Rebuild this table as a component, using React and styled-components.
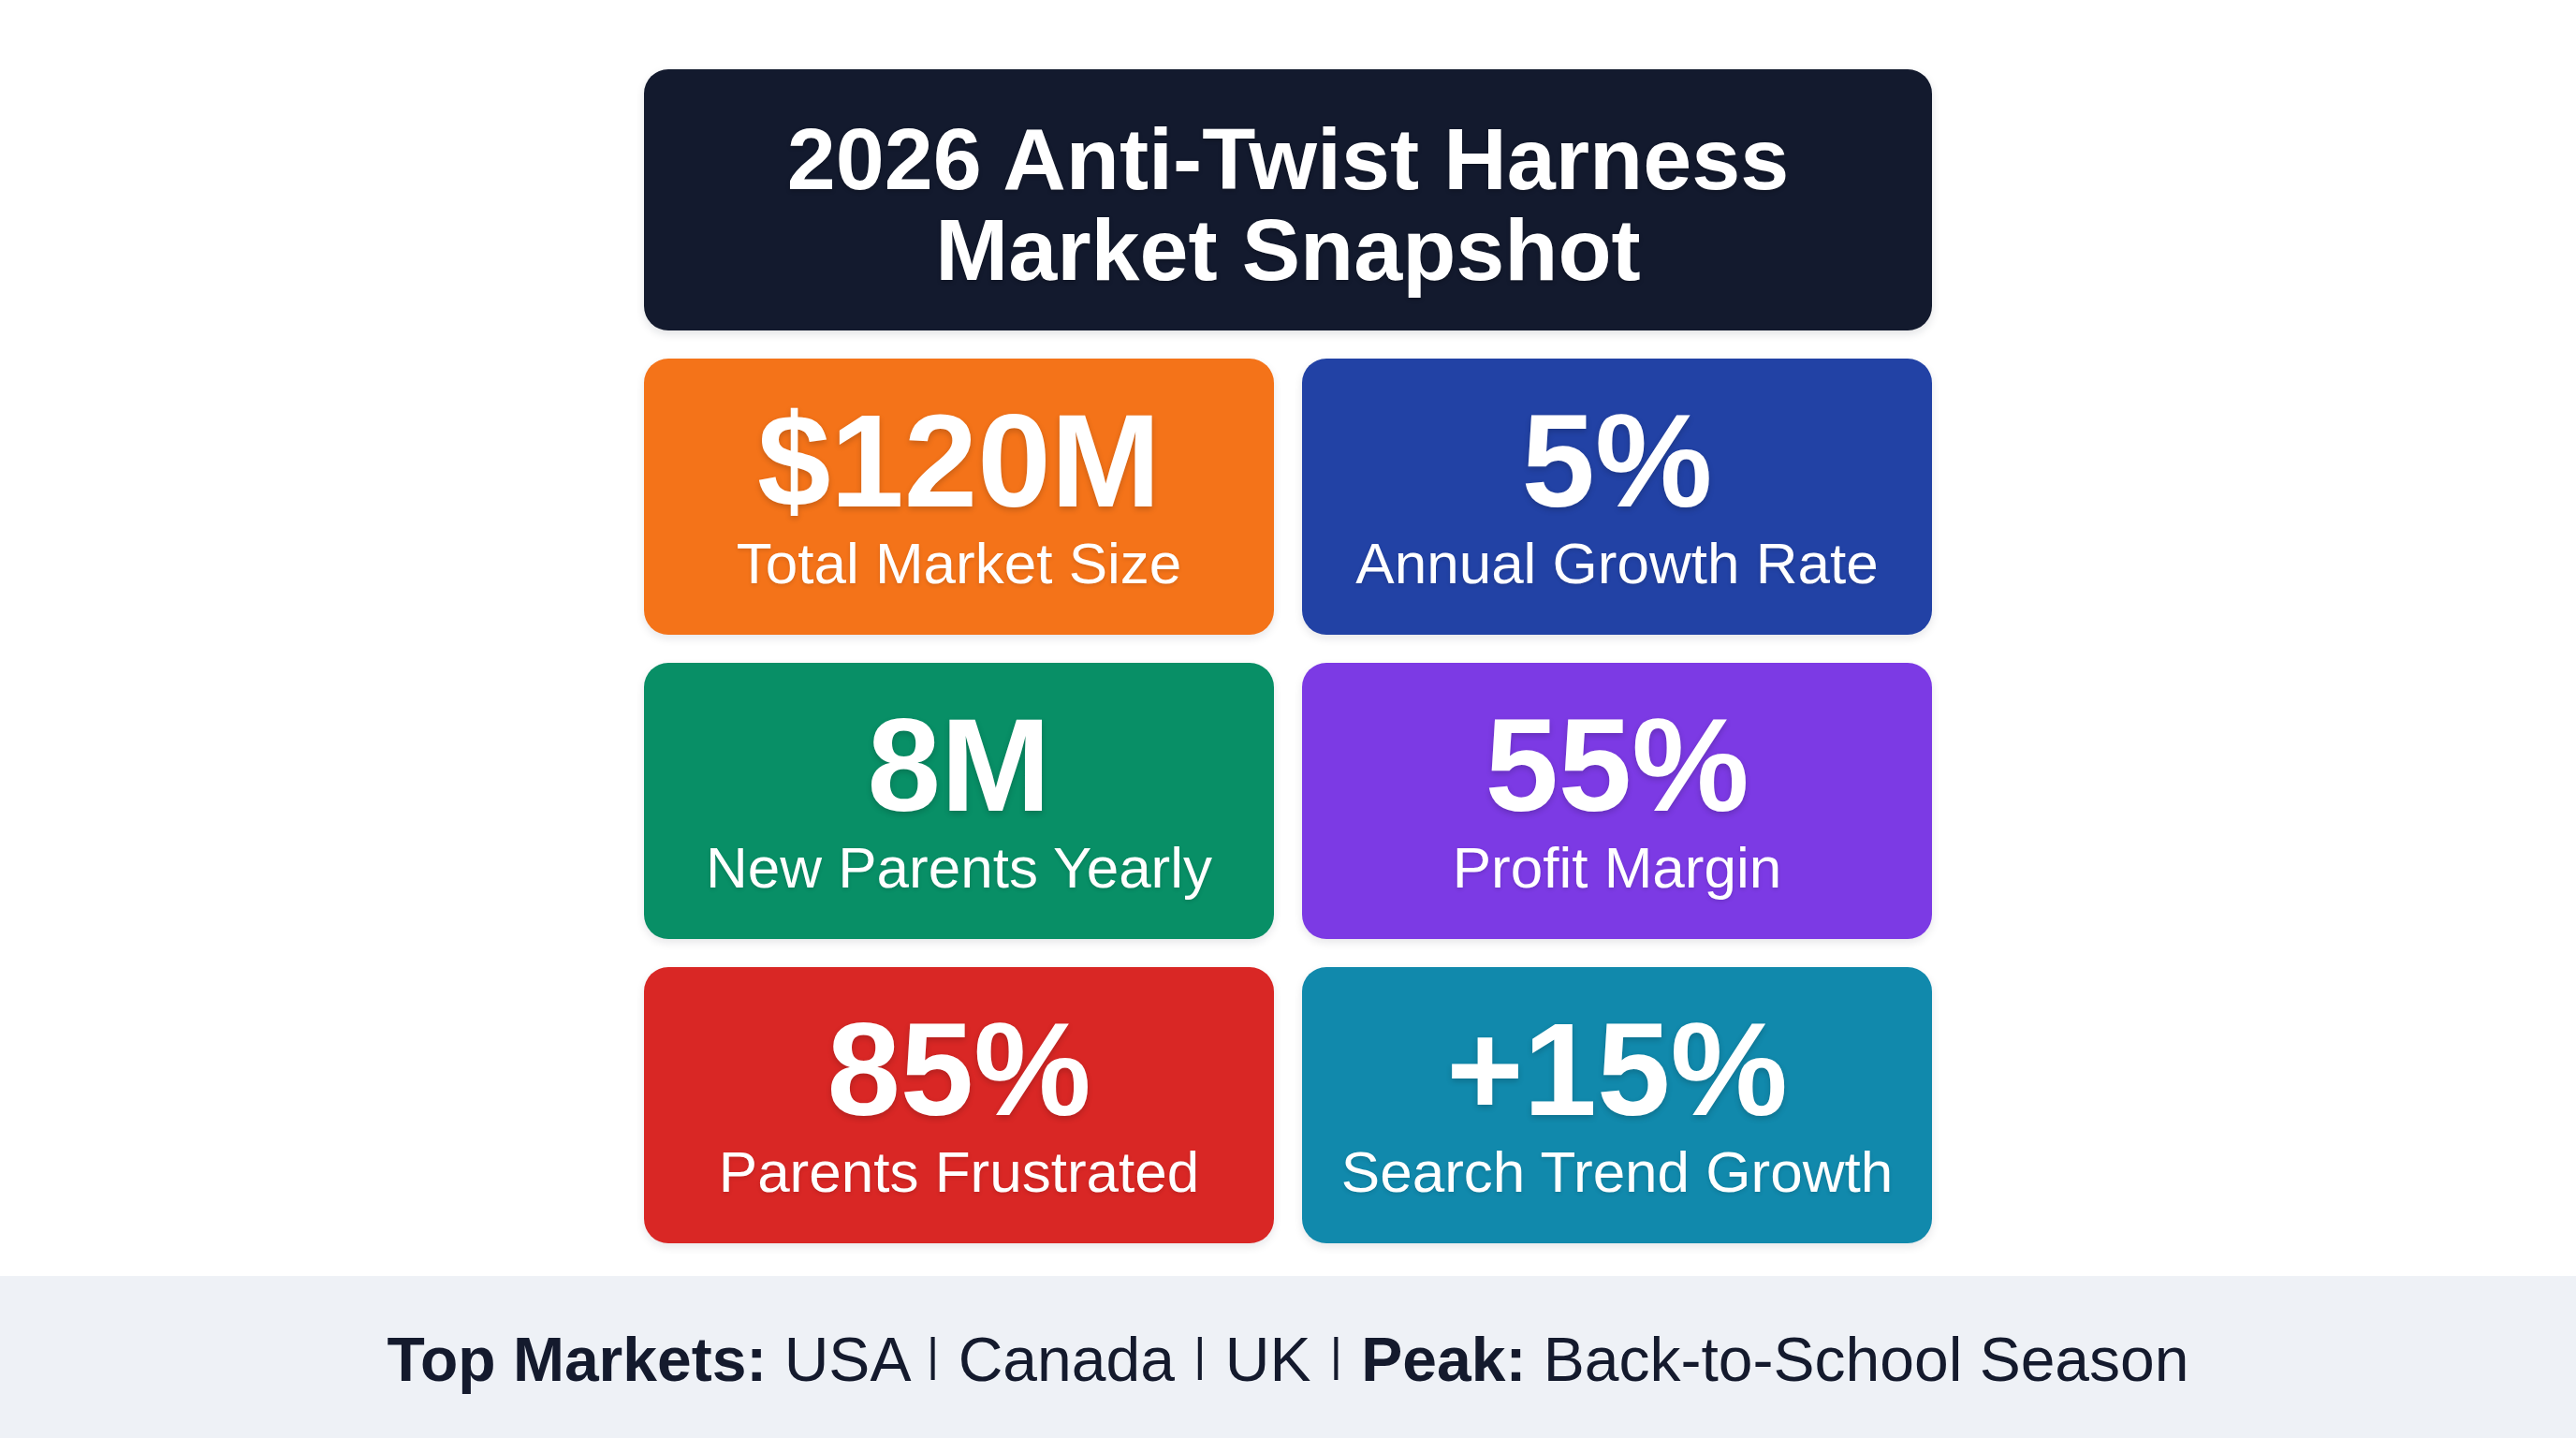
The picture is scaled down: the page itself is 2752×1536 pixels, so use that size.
import styled, { createGlobalStyle } from "styled-components"

const GlobalStyle = createGlobalStyle`
  html, body {
    margin: 0;
    padding: 0;
    background: #ffffff;
  }

  body {
    font-family: "Liberation Sans", Arial, Helvetica, sans-serif;
  }
`

const Page = styled.div`
  display: flex;
  flex-direction: column;
  width: 100%;
  height: 1536px;
  overflow: hidden;
`

const Main = styled.main`
  flex: 1;
  display: flex;
  justify-content: center;
  padding-top: 74px;
`

const Board = styled.div`
  display: flex;
  flex-direction: column;
  gap: 30px;
  width: 1376px;
`

const TitleCard = styled.div`
  height: 279px;
  display: flex;
  align-items: center;
  justify-content: center;
  background: #131a2e;
  border-radius: 26px;
  box-shadow: 0 4px 10px rgba(15, 23, 42, 0.12);
`

const Title = styled.h1`
  margin: 0;
  padding-top: 8px;
  color: #ffffff;
  font-size: 93.5px;
  font-weight: 700;
  line-height: 97px;
  text-align: center;
  text-shadow: 0 2px 4px rgba(0, 0, 0, 0.25);
`

const Grid = styled.div`
  display: grid;
  grid-template-columns: 1fr 1fr;
  grid-auto-rows: 295px;
  gap: 30px;
`

const StatCard = styled.div`
  display: flex;
  flex-direction: column;
  align-items: center;
  justify-content: center;
  gap: 2px;
  background: ${({ $bg }) => $bg};
  border-radius: 26px;
  color: #ffffff;
  box-shadow: 0 4px 10px rgba(15, 23, 42, 0.1);
`

const Value = styled.div`
  font-size: 141px;
  font-weight: 700;
  line-height: 1;
  text-shadow: 0 3px 6px rgba(0, 0, 0, 0.18);
`

const Label = styled.div`
  font-size: 62px;
  font-weight: 400;
  line-height: 1.2;
  text-shadow: 0 2px 4px rgba(0, 0, 0, 0.12);
`

const Footer = styled.footer`
  height: 173px;
  display: flex;
  align-items: center;
  justify-content: center;
  padding-top: 4px;
  box-sizing: border-box;
  background: #eef1f6;
  color: #141a2d;
  font-size: 66px;
  line-height: 1;
`

const Strong = styled.b`
  font-weight: 700;
`

// smaller bar lifted onto the baseline, as in the picture
const Sep = styled.span`
  font-size: 0.77em;
  vertical-align: 0.21em;
  margin: 0 2px;
`

const stats = [
  { value: "$120M", label: "Total Market Size", bg: "#f47319" },
  { value: "5%", label: "Annual Growth Rate", bg: "#2242a5" },
  { value: "8M", label: "New Parents Yearly", bg: "#088f66" },
  { value: "55%", label: "Profit Margin", bg: "#7c3ae4" },
  { value: "85%", label: "Parents Frustrated", bg: "#d92725" },
  { value: "+15%", label: "Search Trend Growth", bg: "#1189ac" }
]

function App() {
  return (
    <>
      <GlobalStyle />
      <Page>
        <Main>
          <Board>
            <TitleCard>
              <Title>
                2026 Anti-Twist Harness
                <br />
                Market Snapshot
              </Title>
            </TitleCard>
            <Grid>
              {stats.map((s) => (
                <StatCard key={s.label} $bg={s.bg}>
                  <Value>{s.value}</Value>
                  <Label>{s.label}</Label>
                </StatCard>
              ))}
            </Grid>
          </Board>
        </Main>
        <Footer>
          <span>
            <Strong>Top Markets:</Strong> USA <Sep>|</Sep> Canada <Sep>|</Sep> UK <Sep>|</Sep>{" "}
            <Strong>Peak:</Strong> Back-to-School Season
          </span>
        </Footer>
      </Page>
    </>
  )
}

export default App
